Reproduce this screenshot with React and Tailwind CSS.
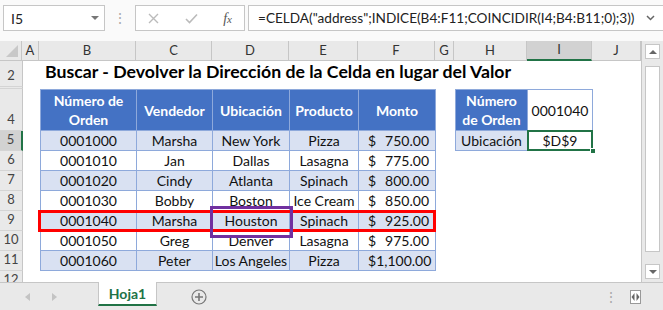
import React from 'react'

const font = { fontFamily: 'Lato, "Liberation Sans", sans-serif' }

const rows = [
  ['0001000', 'Marsha', 'New York', 'Pizza', '750.00'],
  ['0001010', 'Jan', 'Dallas', 'Lasagna', '775.00'],
  ['0001020', 'Cindy', 'Atlanta', 'Spinach', '800.00'],
  ['0001030', 'Bobby', 'Boston', 'Ice Cream', '850.00'],
  ['0001040', 'Marsha', 'Houston', 'Spinach', '925.00'],
  ['0001050', 'Greg', 'Denver', 'Lasagna', '975.00'],
  ['0001060', 'Peter', 'Los Angeles', 'Pizza', '1,100.00'],
]

const colHeads = [
  ['A', 'w-[17px]'],
  ['B', 'w-[97px]'],
  ['C', 'w-[76px]'],
  ['D', 'w-[77px]'],
  ['E', 'w-[69px]'],
  ['F', 'w-[77px]'],
  ['G', 'w-[19px]'],
  ['H', 'w-[73px]'],
  ['I', 'w-[65px]'],
  ['J', 'w-[49px]'],
]

function RowHead({ n, active, className = '' }) {
  return (
    <div
      className={
        'w-[23px] shrink-0 flex items-end justify-center pb-[1px] text-[13px] text-[#444] border-b border-[#d4d4d4] ' +
        (active ? 'bg-[#d2d2d2] border-r-2 border-r-[#217346] ' : 'bg-[#e9e9e9] border-r border-r-[#c6c6c6] ') +
        className
      }
    >
      {n}
    </div>
  )
}

function TopBar() {
  return (
    <div className="h-[41px] bg-[#fafafa] flex items-start pt-[5px] pl-[3px] text-[14px] text-[#222]">
      <div className="w-[102px] h-[26px] bg-white border border-[#c6c6c6] flex items-center justify-between pl-[7px] pr-[5px]">
        <span>I5</span>
        <span className="w-0 h-0 border-l-[4px] border-r-[4px] border-t-[4px] border-l-transparent border-r-transparent border-t-[#777]" />
      </div>
      <div className="w-[30px] h-[26px] flex items-center justify-center text-[#aaa] text-[14px] leading-none">⋮</div>
      <div className="w-[110px] h-[26px] bg-white border border-[#c6c6c6] flex items-center justify-between px-[12px]">
        <svg width="11" height="11" viewBox="0 0 11 11">
          <path d="M1 1 L10 10 M10 1 L1 10" stroke="#bbb" strokeWidth="1.4" />
        </svg>
        <svg width="13" height="11" viewBox="0 0 13 11">
          <path d="M1 6 L4.5 9.5 L12 1.5" stroke="#bbb" strokeWidth="1.6" fill="none" />
        </svg>
        <span className="italic text-[#555] text-[14px]" style={{ fontFamily: '"Liberation Serif", serif' }}>
          f<span className="text-[11px]">x</span>
        </span>
      </div>
      <div className="flex-1 ml-[3px] h-[26px] bg-white border border-r-0 border-[#c6c6c6] flex items-center justify-between pl-[9px] pr-[8px]">
        <span className="whitespace-nowrap text-[13.6px]">=CELDA("address";INDICE(B4:F11;COINCIDIR(I4;B4:B11;0);3))</span>
        <svg width="9" height="6" viewBox="0 0 9 6">
          <path d="M1 1 L4.5 4.5 L8 1" stroke="#666" strokeWidth="1.5" fill="none" />
        </svg>
      </div>
    </div>
  )
}

function ColumnHeader() {
  return (
    <div className="flex h-[20px] bg-[#e9e9e9]">
      <div className="w-[23px] border-r border-b border-[#c6c6c6] relative">
        <svg className="absolute right-[3px] bottom-[3px]" width="12" height="12" viewBox="0 0 12 12">
          <path d="M12 0 L12 12 L0 12 Z" fill="#c8c8c8" />
        </svg>
      </div>
      {colHeads.map(([l, w]) => (
        <div
          key={l}
          className={
            w +
            ' shrink-0 flex items-center justify-center text-[13px] text-[#333] border-r border-[#c6c6c6] ' +
            (l === 'I' ? 'bg-[#d2d2d2] border-b-2 border-b-[#217346]' : 'border-b border-b-[#c6c6c6]')
          }
        >
          {l}
        </div>
      ))}
    </div>
  )
}

const cellB = 'border-r border-b border-[#8ea9db] shrink-0 flex items-center'

function Sheet() {
  return (
    <div className="relative w-[642px] h-[241px] bg-white border-r border-[#c6c6c6] overflow-hidden text-[#111]" style={font}>
      <ColumnHeader />

      {/* row 2 */}
      <div className="flex h-[26px]">
        <RowHead n="2" />
        <div className="w-[17px]" />
        <div className="pl-[5px] flex items-end pb-[1px] font-bold text-[17.7px] whitespace-nowrap text-black">
          Buscar - Devolver la Dirección de la Celda en lugar del Valor
        </div>
      </div>

      {/* row 3 hidden */}
      <div className="flex h-[2px]">
        <RowHead n="" />
      </div>

      {/* row 4 */}
      <div className="flex h-[42px] text-[14px]">
        <RowHead n="4" />
        <div className="w-[17px]" />
        <div className={cellB + ' w-[97px] border-l border-t bg-[#4472c4] text-white font-bold justify-center text-center leading-[19px]'}>
          Número de<br />Orden
        </div>
        <div className={cellB + ' w-[76px] border-t bg-[#4472c4] text-white font-bold justify-center'}>Vendedor</div>
        <div className={cellB + ' w-[77px] border-t bg-[#4472c4] text-white font-bold justify-center'}>Ubicación</div>
        <div className={cellB + ' w-[69px] border-t bg-[#4472c4] text-white font-bold justify-center'}>Producto</div>
        <div className={cellB + ' w-[77px] border-t bg-[#4472c4] text-white font-bold justify-center'}>Monto</div>
        <div className="w-[19px]" />
        <div className={cellB + ' w-[73px] border-l border-t bg-[#4472c4] text-white font-bold justify-center text-center leading-[19px]'}>
          Número<br />de Orden
        </div>
        <div className={cellB + ' w-[65px] border-t bg-white justify-center'}>0001040</div>
      </div>

      {rows.map((r, i) => {
        const band = i % 2 === 0 ? 'bg-[#d9e1f2]' : 'bg-white'
        return (
          <div key={i} className="flex h-[20px] text-[14px]">
            <RowHead n={String(i + 5)} active={i === 0} />
            <div className="w-[17px]" />
            <div className={cellB + ' w-[97px] border-l justify-center ' + band}>{r[0]}</div>
            <div className={cellB + ' w-[76px] justify-center ' + band}>{r[1]}</div>
            <div className={cellB + ' w-[77px] justify-center whitespace-nowrap ' + band}>{r[2]}</div>
            <div className={cellB + ' w-[69px] justify-center whitespace-nowrap ' + band}>{r[3]}</div>
            <div className={cellB + ' w-[77px] justify-between pl-[9px] pr-[6px] ' + band}>
              <span>$</span>
              <span>{r[4]}</span>
            </div>
            {i === 0 && (
              <>
                <div className="w-[19px]" />
                <div className={cellB + ' w-[73px] border-l justify-center bg-[#d9e1f2]'}>Ubicación</div>
                <div className={cellB + ' w-[65px] justify-center bg-white relative'}>
                  $D$9
                  <div className="absolute -left-[1px] -top-[1px] -right-[1px] -bottom-[1px] border-2 border-[#217346]" />
                  <div className="absolute -right-[4px] -bottom-[4px] w-[6px] h-[6px] bg-[#217346] border border-white" />
                </div>
              </>
            )}
          </div>
        )
      })}

      {/* row 12 partial */}
      <div className="flex h-[20px]">
        <RowHead n="12" />
      </div>

      {/* shapes */}
      <div className="absolute left-[38px] top-[169px] w-[398px] h-[22px] border-[3px] border-[#ff0000]" />
      <div className="absolute left-[210px] top-[165px] w-[83px] h-[32px] border-[3px] border-[#7030a0]" />
    </div>
  )
}

function ScrollBar() {
  return (
    <div className="w-[21px] h-[241px] bg-[#e9e9e9] flex flex-col items-center pt-[3px] gap-[7px]">
      <div className="w-[15px] h-[15px] bg-white border border-[#c6c6c6] flex items-center justify-center">
        <span className="w-0 h-0 border-l-[4px] border-r-[4px] border-b-[4px] border-l-transparent border-r-transparent border-b-[#666]" />
      </div>
      <div className="w-[15px] h-[186px] bg-white border border-[#c6c6c6]" />
      <div className="mt-auto mb-[3px] w-[15px] h-[15px] bg-white border border-[#c6c6c6] flex items-center justify-center">
        <span className="w-0 h-0 border-l-[4px] border-r-[4px] border-t-[4px] border-l-transparent border-r-transparent border-t-[#666]" />
      </div>
    </div>
  )
}

function TabBar() {
  return (
    <div className="h-[28px] bg-[#e9e9e9] border-t border-[#c6c6c6] flex items-start relative" style={font}>
      <div className="w-[98px] h-full flex items-center pl-[25px] gap-[22px] text-[#c3c3c3]">
        <span className="w-0 h-0 border-t-[4px] border-b-[4px] border-r-[5px] border-t-transparent border-b-transparent border-r-[#c3c3c3]" />
        <span className="w-0 h-0 border-t-[4px] border-b-[4px] border-l-[5px] border-t-transparent border-b-transparent border-l-[#c3c3c3]" />
      </div>
      <div className="w-[59px] h-[24px] -mt-[1px] bg-white border-x border-[#c6c6c6] border-b-2 border-b-[#217346] flex items-center justify-center font-bold text-[14px] text-[#217346]">
        Hoja1
      </div>
      <div className="ml-[34px] h-full flex items-center">
        <svg width="16" height="16" viewBox="0 0 16 16">
          <circle cx="8" cy="8" r="7" fill="none" stroke="#777" strokeWidth="1.2" />
          <path d="M8 4 V12 M4 8 H12" stroke="#777" strokeWidth="1.6" />
        </svg>
      </div>
      <div className="ml-auto h-full flex items-center gap-[12px] pr-[22px]">
        <span className="text-[#aaa] text-[14px] leading-none">⋮</span>
        <svg width="11" height="14" viewBox="0 0 11 14">
          <rect x="0.5" y="0.5" width="10" height="13" fill="white" stroke="#999" />
          <path d="M4.5 3 L1.5 7 L4.5 11 Z M6.5 3 L9.5 7 L6.5 11 Z" fill="#666" />
        </svg>
      </div>
    </div>
  )
}

export default function App() {
  return (
    <div className="w-[663px] h-[310px] overflow-hidden bg-white flex flex-col" style={font}>
      <TopBar />
      <div className="flex">
        <Sheet />
        <ScrollBar />
      </div>
      <TabBar />
    </div>
  )
}
